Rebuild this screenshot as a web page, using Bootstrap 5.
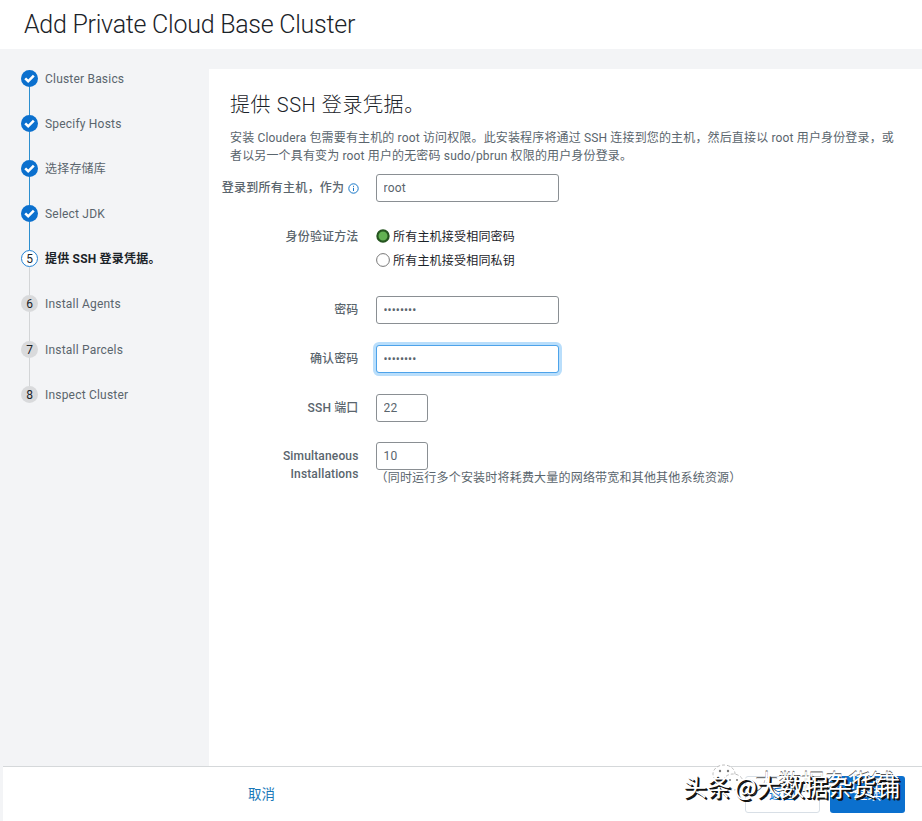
<!DOCTYPE html>
<html lang="zh-CN">
<head>
<meta charset="utf-8">
<meta name="viewport" content="width=device-width, initial-scale=1">
<title>Add Private Cloud Base Cluster</title>
<link href="https://cdn.jsdelivr.net/npm/bootstrap@5.3.0/dist/css/bootstrap.min.css" rel="stylesheet">
<style>
body{font-family:Roboto,"Noto Sans CJK SC",sans-serif;font-size:12px;line-height:17.5px;letter-spacing:.2px;color:#5a656d;background:#f3f4f6;height:821px;overflow:hidden}
.page-head{height:49px;padding:0 0 0 24px}
.page-head h1{font-size:25px;font-weight:300;line-height:50px;letter-spacing:-.26px;color:#1b2329}
.steps{width:209px;padding:20.5px 0 0 21px}
.step{height:45.2px;position:relative;line-height:18px}
.step::after{content:"";position:absolute;left:8px;top:17px;bottom:0;width:1px;background:#d3d5d7}
.step.done::after{background:#2c8fd0}
.step:last-child::after{display:none}
.dot{width:17px;height:17px;margin-right:7px;border-radius:50%;background:#d9dadc;color:#1b2329;letter-spacing:0;text-align:center;flex:none}
.done .dot{background:#0b70ce}
.dot svg{display:block}
.current .dot{background:#fff;border:1px solid #2583d5;line-height:16px}
.current{font-weight:700;color:#1b2329}
.current .dot{font-weight:400}
.panel{margin-top:20px;padding:22px 20px 0 12px}
.panel h2{font-size:20px;font-weight:300;line-height:28px;letter-spacing:.6px;margin:0 0 11px 9px;color:#1b2329}
.intro{margin:0 0 9px 9px;white-space:nowrap;letter-spacing:.15px}
.form-line{margin-bottom:20.9px}
.form-line label.name{width:137.5px;margin-right:17px;text-align:right;font-weight:500;padding-top:6px;letter-spacing:.15px}
.form-line label.name.text-nowrap{letter-spacing:.25px}
.form-line .form-control{width:183px;height:28px;padding:0 7px;border:1px solid #8a8f93;border-radius:3px;font-size:12px;line-height:26px;letter-spacing:.2px;color:#5a656d;box-shadow:none}
.form-line .form-control.short{width:52px}
.form-line .form-control.active-field{border-color:#4da3ea;box-shadow:0 0 0 3px #b9defb}
.form-line .form-control.secret{font-size:12px;letter-spacing:.05px}
.choices{padding-top:1px;height:52px}
.choice{height:24px;color:#1b2329}
.choice svg{margin-right:3.5px}
.choice span{padding-top:3px}
.foot{height:55px;margin-left:3px;border-top:1px solid #d5d8da;position:relative}
.cancel{padding:17px 0 0 245px;font-size:13.5px;line-height:20px;letter-spacing:0;color:#1877b8;text-decoration:none}
.foot .btn{width:75px;height:37px;border-radius:3px;font-size:13.5px;padding:0;letter-spacing:0}
.foot .btn-back{color:#0b70ce;border:1px solid #d8dfe6;background:#fff;margin-right:10px}
.foot .btn-next{background:#0b70ce;color:#fff;border:0;margin-right:17px}
.actions{padding-top:9px}
.stamp{position:absolute;white-space:nowrap;color:#fff;letter-spacing:0;pointer-events:none;font-family:"Noto Sans CJK SC",sans-serif}
.stamp-back{left:752px;top:1px;font-size:23.2px;line-height:26px;text-shadow:0 -1px 0 #555}
.stamp-front{left:680px;top:3px;font-size:23.9px;line-height:32px;text-shadow:2px 2px 0 #111,1px 1px 0 #111;word-spacing:-2px}
.stamp-logo{position:absolute;left:707px;top:-4px}
</style>
</head>
<body class="d-flex flex-column">
<header class="page-head bg-white"><h1 class="m-0">Add Private Cloud Base Cluster</h1></header>
<main class="d-flex flex-grow-1 overflow-hidden">
  <nav class="steps flex-shrink-0">
    <div class="step done d-flex"><span class="dot"><svg width="17" height="17" viewBox="0 0 17 17"><path d="M4.2 8.4 7.2 11.3 12.8 5.7" fill="none" stroke="#fff" stroke-width="2.6"/></svg></span>Cluster Basics</div>
    <div class="step done d-flex"><span class="dot"><svg width="17" height="17" viewBox="0 0 17 17"><path d="M4.2 8.4 7.2 11.3 12.8 5.7" fill="none" stroke="#fff" stroke-width="2.6"/></svg></span>Specify Hosts</div>
    <div class="step done d-flex"><span class="dot"><svg width="17" height="17" viewBox="0 0 17 17"><path d="M4.2 8.4 7.2 11.3 12.8 5.7" fill="none" stroke="#fff" stroke-width="2.6"/></svg></span>选择存储库</div>
    <div class="step done d-flex"><span class="dot"><svg width="17" height="17" viewBox="0 0 17 17"><path d="M4.2 8.4 7.2 11.3 12.8 5.7" fill="none" stroke="#fff" stroke-width="2.6"/></svg></span>Select JDK</div>
    <div class="step current d-flex"><span class="dot">5</span>提供 SSH 登录凭据。</div>
    <div class="step d-flex"><span class="dot">6</span>Install Agents</div>
    <div class="step d-flex"><span class="dot">7</span>Install Parcels</div>
    <div class="step d-flex"><span class="dot">8</span>Inspect Cluster</div>
  </nav>
  <section class="panel bg-white flex-grow-1">
    <h2>提供 SSH 登录凭据。</h2>
    <p class="intro">安装 Cloudera 包需要有主机的 root 访问权限。此安装程序将通过 SSH 连接到您的主机，然后直接以 root 用户身份登录，或<br>者以另一个具有变为 root 用户的无密码 sudo/pbrun 权限的用户身份登录。</p>
    <form>
      <div class="form-line d-flex"><label class="name text-nowrap">登录到所有主机，作为 <svg width="11" height="11" viewBox="0 0 11 11" fill="none" stroke="#1877c8"><circle cx="5.5" cy="5.5" r="4.7"/><path d="M5.5 4.8V8M5.5 2.8V3.9"/></svg></label><input class="form-control" type="text" value="root"></div>
      <div class="form-line d-flex"><label class="name">身份验证方法</label>
        <div class="choices">
          <div class="choice d-flex align-items-center"><svg width="14" height="14" viewBox="0 0 14 14"><circle cx="7" cy="7" r="5.6" fill="#62b152" stroke="#25551f" stroke-width="2.2"/></svg><span>所有主机接受相同密码</span></div>
          <div class="choice d-flex align-items-center"><svg width="14" height="14" viewBox="0 0 14 14"><circle cx="7" cy="7" r="6.4" fill="#fff" stroke="#777"/></svg><span>所有主机接受相同私钥</span></div>
        </div>
      </div>
      <div class="form-line d-flex"><label class="name">密码</label><input class="form-control secret" type="password" value="password"></div>
      <div class="form-line d-flex"><label class="name">确认密码</label><input class="form-control secret active-field" type="password" value="password"></div>
      <div class="form-line d-flex"><label class="name">SSH 端口</label><input class="form-control short" type="text" value="22"></div>
      <div class="form-line d-flex"><label class="name">Simultaneous Installations</label><div><input class="form-control short" type="text" value="10"><div class="hint">（同时运行多个安装时将耗费大量的网络带宽和其他其他系统资源）</div></div></div>
    </form>
  </section>
</main>
<footer class="foot bg-white d-flex justify-content-between flex-shrink-0">
  <a class="cancel" href="#">取消</a>
  <div class="actions d-flex"><button class="btn btn-back" type="button">返回</button><button class="btn btn-next" type="button">继续</button></div>
  <svg class="stamp-logo" width="36" height="30" viewBox="0 0 36 30" fill="#fff" stroke="#aaa" stroke-width=".8" stroke-dasharray="3 2"><ellipse cx="14" cy="11" rx="11" ry="9"/><ellipse cx="23" cy="19" rx="10" ry="8"/><g fill="#777" stroke="none"><circle cx="10" cy="8" r="1.2"/><circle cx="18" cy="8" r="1.2"/><circle cx="20" cy="17" r="1"/><circle cx="27" cy="17" r="1"/></g></svg>
  <span class="stamp stamp-back">大数据杂货铺</span>
  <span class="stamp stamp-front">头条 @大数据杂货铺</span>
</footer>
<script src="https://cdn.jsdelivr.net/npm/bootstrap@5.3.0/dist/js/bootstrap.bundle.min.js"></script>
</body>
</html>
